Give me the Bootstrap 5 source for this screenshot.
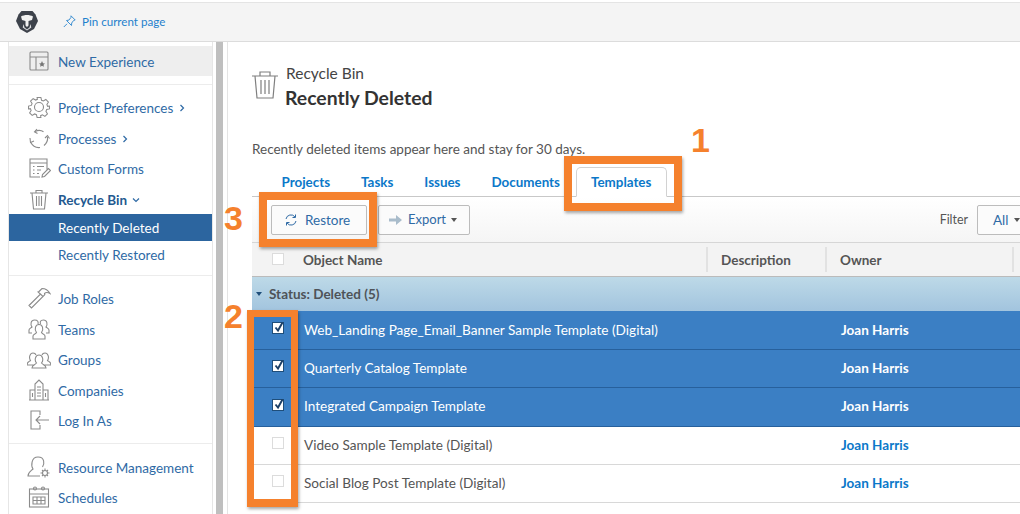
<!DOCTYPE html>
<html lang="en"><head><meta charset="utf-8"><title>Recycle Bin</title>
<link href="https://cdn.jsdelivr.net/npm/bootstrap@5.3.0/dist/css/bootstrap.min.css" rel="stylesheet">
<style>
html,body{height:514px;overflow:hidden;background:#fff}
body{font-family:Lato,"Liberation Sans",sans-serif;font-size:13.6px;color:#555;position:relative}
.topbar{height:40px;margin-top:2px;background:#f4f4f4;border-top:1px solid #e4e4e4;border-bottom:1px solid #dcdcdc;padding-left:15px}
.pin-link{margin-left:24px;font-size:11.6px;color:#1f80cc;text-decoration:none;gap:6px}
.shell{height:472px;overflow:hidden}
.side-nav{width:205px;margin-left:8px;border-left:1px solid #e6e6e6;border-right:1px solid #e6e6e6;flex:none;font-size:13.5px}
.side-sec{border-bottom:1px solid #ececec}
.sec-a{padding:4px 0 8px}
.sec-b{padding:7px 0}
.sec-c{padding:8px 0 0;border-bottom:0}
.side-link{height:30.5px;padding:2px 0 0 18px;gap:7px;color:#2f6aa5;text-decoration:none;white-space:nowrap}
.side-link svg{width:24px;height:24px;flex:none;fill:none;stroke:#8b8b8b;stroke-width:1.1;margin-top:-2px}
.side-link .chev{width:8px;height:8px;stroke:#2f6aa5;stroke-width:1.2;margin:0 0 0 -2px}
.side-first{height:30px;background:#eee}
.side-sub{height:27px;padding:2px 0 0 49px;color:#2f6aa5;text-decoration:none}
.side-sub.on{background:#2c659f;color:#fff}
.side-strong{font-weight:700;color:#23598f}
.rail{width:7px;margin-left:3px;background:#bfbfbf;flex:none}
.pane{margin-left:4px;border-left:1px solid #e4e4e4;padding:21px 0 0 24px;flex:1;min-width:0;overflow:hidden}
.title-wrap{gap:7px;height:45px;margin-left:-1px}
.title-wrap svg{width:28px;height:30px;fill:none;stroke:#7f7f7f;stroke-width:1.2;margin-top:7px}
.crumb{font-size:15.5px;color:#444;line-height:20px}
.page-title{font-size:19.4px;font-weight:700;color:#333;line-height:30px;margin:0 0 0 -1px}
.intro{margin:31px 0 0;line-height:20px;color:#555;font-size:13.5px}
.tab-strip{margin-top:8px;padding-left:14px;height:30px;border-bottom:1px solid #c8c8c8;width:768px}
.tab-strip .nav-link{padding:6px 14.5px;border:1px solid transparent;font-weight:700;font-size:13.4px;color:#0b78c9;line-height:17px;height:30px;border-radius:5px 5px 0 0}
.tab-strip .nav-link.active{color:#0b78c9;background:#fff;border-color:#d2d2d2 #d2d2d2 #fff;height:30px}
.tool-row{width:768px;height:46px;padding:8px 0 0 19px;background:linear-gradient(#fff,#f5f5f5);border-bottom:1px solid #d6d6d6}
.tool-btn{height:30px;padding:0 12px 0 9px;gap:5px;font-size:13px;border:1px solid #bcbcbc;border-radius:2px;background:#fbfbfb;color:#2f6aa5}
.tool-restore{width:96px;margin-right:11px;padding-left:12px;gap:7px;font-size:13.5px}
.tool-filter{margin-left:auto;margin-right:-13px;gap:9px;color:#555;font-size:12.4px;height:30px;padding-top:1px}
.tool-filter .tool-btn{padding:0 0 0 15px;width:56px;font-size:13.5px;margin-top:-1px}
.caret-dn{width:0;height:0;border:3.5px solid transparent;border-top:4px solid #555;border-bottom:0}
.rows-table{table-layout:fixed;width:768px;margin:0;border-collapse:collapse;color:#555}
.rows-table th,.rows-table td{padding:0;vertical-align:middle;border:0;background:transparent;color:inherit;box-shadow:none}
.head-row{height:33px;background:#f3f3f3;font-size:13.5px}
.head-row th{font-weight:700;border-bottom:1px solid #bbb!important}
.head-cell{height:25px;line-height:27px;border-left:2px solid #e2e2e2;padding-left:13px}
.head-name{padding-top:2px!important}
.group-row{height:35px;background:linear-gradient(#bedae8,#a2c4de);font-weight:700;font-size:13.5px}
.group-row td{padding-left:4px!important;color:#4e5358!important}
.tri{display:inline-block;width:0;height:0;border:3.5px solid transparent;border-top:4px solid #1f4e7a;border-bottom:0;margin-right:7px;vertical-align:3px}
.item-row{height:38px}
.item-tall{height:39px}
.item-row td{border-bottom:1px solid #d8d8d8!important}
.item-row.sel{background:#3b7fc4;color:#fff}
.item-row.sel td{border-bottom-color:#27609c!important}
.name-cell{padding-left:1px!important}
.owner{font-weight:700;padding-left:16px!important;color:#0b78c9!important;font-size:13.5px}
.item-row.sel .owner{color:#fff!important}
.box-cell{padding:0 0 4px 20px!important}
.tick{display:block;width:12px;height:12px;background:#fff;border:1px solid #dcdcdc;position:relative}
.sel .tick{border:1px solid #1f4e7a}
.tick svg{position:absolute;left:0;top:-2px;width:12px;height:12px}
.head-tick{margin:0 0 0 20px}
.mark-box{position:absolute;border:8px solid #f5812d;box-shadow:1px 2px 3px rgba(0,0,0,.35);pointer-events:none}
.mark-thin{border-width:7px 7px 8px}
.mark-num{position:absolute;color:#f5812d;font:700 34px/34px "Liberation Sans",sans-serif}
</style></head>
<body>
<header class="topbar d-flex align-items-center">
<svg width="24" height="24" viewBox="0 0 24 24"><path d="M6.500 1h11l3 3.500L23 11l-4 8-7 4-7-4-4-8 2.500-6.500z" fill="#3d424b"/><path d="M6 6.500c3.500-2 8.500-2 12 0l-1 3.500-3.500 1v4.500L12 17l-1.500-1.500V11L7 10z" fill="#f2f2f2"/><path d="M8.500 14l1 3.500 2.500 2 2.500-2 1-3.500.8 3.500-4.300 3-4.300-3z" fill="#dfe0e2"/></svg>
<a class="pin-link d-flex align-items-center" href="#"><svg width="13" height="13" viewBox="0 0 13 13" fill="none" stroke="#3d8fd1"><path d="M8 .8l4.200 4.200-1.500.4-2 2.600-.2 2.500-5-5 2.400-.4L8 2.400zM4 8.800L.8 12"/></svg>Pin current page</a>
</header>
<div class="shell d-flex">
<nav class="side-nav">
<div class="side-sec sec-a">
<a class="side-link side-first d-flex align-items-center" href="#"><svg viewBox="0 0 24 24"><rect x="3" y="3" width="18" height="18" rx="1"/><path d="M3 8h18M9 8v13"/><path d="M15 12l1 2.200 2 .2-1.500 1.400.4 2-1.900-1-1.900 1 .4-2-1.500-1.400 2-.2z" fill="#777" stroke="none"/></svg>New Experience</a>
</div>
<div class="side-sec sec-b">
<a class="side-link d-flex align-items-center" href="#"><svg viewBox="0 0 24 24"><circle cx="12" cy="12" r="4.500"/><path d="M10 2h4l.7 2.900 1.900.8 2.600-1.600 2.700 2.700-1.600 2.600.8 1.900L23 11v3l-2.900.7-.8 1.900 1.600 2.600-2.700 2.700-2.600-1.600-1.900.8L14 23h-4l-.7-2.900-1.900-.8-2.600 1.600-2.700-2.700 1.600-2.600-.8-1.900L1 14v-3l2.900-.7.8-1.900-1.600-2.600 2.700-2.700 2.600 1.600 1.900-.8z" transform="translate(.6 .6) scale(.95)"/></svg>Project Preferences<svg class="chev" viewBox="0 0 8 8"><path d="M2.500 1l3 3-3 3"/></svg></a>
<a class="side-link d-flex align-items-center" href="#"><svg viewBox="0 0 24 24"><path d="M8 5.500c3-1.500 6-1.500 8.500.3M20.500 11c.5 3.500-.5 6-3.500 8.500M13 21.500c-4 .5-7-.8-9.500-5.500"/><path d="M10 3L7.500 5.800l3 1.700M22.500 12.500L20.500 9.500 18 12M3 12l.5 4.500L7 15" /></svg>Processes<svg class="chev" viewBox="0 0 8 8"><path d="M2.500 1l3 3-3 3"/></svg></a>
<a class="side-link d-flex align-items-center" href="#"><svg viewBox="0 0 24 24"><path d="M13 21H3V3h17v11M3 7h17M6 10.500h1.500M10 10.500h7M6 14h1.500M10 14h4M6 17.500h1.500M10 17.500h2M15 21l.5-2.500 6-6 2 2-6 6z"/></svg>Custom Forms</a>
<a class="side-link side-strong d-flex align-items-center" href="#"><svg viewBox="0 0 24 24"><path d="M3 6h18M9 6V3.500h6V6M5 6l1.500 16h11L19 6M9.500 9v10M12 9v10M14.500 9v10"/></svg>Recycle Bin<svg class="chev" viewBox="0 0 8 8"><path d="M1 2.500l3 3 3-3"/></svg></a>
<a class="side-sub on d-flex align-items-center" href="#">Recently Deleted</a>
<a class="side-sub d-flex align-items-center" href="#">Recently Restored</a>
</div>
<div class="side-sec sec-b">
<a class="side-link d-flex align-items-center" href="#"><svg viewBox="0 0 24 24"><path d="M2 19.500L13.500 8l2.500 2.500L4.500 22zM12 5.500L15 2.500c3 0 6 1.500 8 5-2.500-1.500-4-1.500-5.500 0l.3 1-1.800 2-5-4.500z"/></svg>Job Roles</a>
<a class="side-link d-flex align-items-center" href="#"><svg viewBox="0 0 24 24"><path d="M5 16H2v-3c0-1.500 2-2 3-3-2-3-1-7 2.500-7s4 2 3.500 4M19 16h3v-3c0-1.500-2-2-3-3 2-3 1-7-2.500-7S13 5 13.500 7M6 22v-3c0-2 3-2 3.500-3.500-2.500-3.500-1-8 2.500-8s5 4.500 2.500 8C15 17 18 17 18 19v3z"/></svg>Teams</a>
<a class="side-link d-flex align-items-center" href="#"><svg viewBox="0 0 24 24"><path d="M7 18H0c0-3 1.500-3 3.500-4.500-2-3-.5-7.500 2.500-7.500 1.500 0 2.500.5 3 2M17 18h7c0-3-1.500-3-3.500-4.500 2-3 .5-7.500-2.500-7.500-1.500 0-2.500.5-3 2M5 21c0-3 3-3 4.500-5-2.500-3-1-8 2.500-8s5 5 2.500 8c1.500 2 4.500 2 4.500 5z"/></svg>Groups</a>
<a class="side-link d-flex align-items-center" href="#"><svg viewBox="0 0 24 24"><path d="M8 22V6l4-4 4 4v16M8 22H3V12h5M16 12h5v10h-5M2 22h20M10 9h4M10 12h4M10 15h4M10 18h4M5.500 15v4M18.500 15v4"/></svg>Companies</a>
<a class="side-link d-flex align-items-center" href="#"><svg viewBox="0 0 24 24"><path d="M13 7V3H4v18h9v-4M22 12H9M13 8l-4 4 4 4"/></svg>Log In As</a>
</div>
<div class="side-sec sec-c">
<a class="side-link d-flex align-items-center" href="#"><svg viewBox="0 0 24 24"><path d="M13 21H1c0-4 3-5 5-7-2-3-2-12 5-12s6.500 7 4.500 10"/><circle cx="18" cy="18" r="2.500"/><path d="M18 13.500v2M18 20.500v2M13.500 18h2M20.500 18h2M15 15l1.200 1.200M19.800 19.800L21 21M15 21l1.200-1.200M19.800 16.200L21 15"/></svg>Resource Management</a>
<a class="side-link d-flex align-items-center" href="#"><svg viewBox="0 0 24 24"><rect x="2.500" y="4" width="19" height="18"/><path d="M2.500 9h19M6 12h12v7H6zM6 15.500h12M10 12v7M14 12v7"/><circle cx="8" cy="3.500" r="1.500"/><circle cx="16" cy="3.500" r="1.500"/></svg>Schedules</a>
</div>
</nav>
<div class="rail"></div>
<main class="pane">
<div class="title-wrap d-flex">
<svg viewBox="0 0 28 30"><path d="M1 6h26M9 6V2h10v4M4 6l2 22h16l2-22M10 10v14M14 10v14M18 10v14"/></svg>
<div><div class="crumb">Recycle Bin</div><h1 class="page-title">Recently Deleted</h1></div>
</div>
<p class="intro">Recently deleted items appear here and stay for 30 days.</p>
<ul class="nav tab-strip">
<li class="nav-item"><a class="nav-link" href="#">Projects</a></li>
<li class="nav-item"><a class="nav-link" href="#">Tasks</a></li>
<li class="nav-item"><a class="nav-link" href="#">Issues</a></li>
<li class="nav-item"><a class="nav-link" href="#">Documents</a></li>
<li class="nav-item"><a class="nav-link active" href="#">Templates</a></li>
</ul>
<div class="tool-row d-flex">
<button class="tool-btn tool-restore d-flex align-items-center" type="button"><svg width="14" height="14" viewBox="0 0 14 14" fill="none" stroke="#2f6aa5"><path d="M2 6a5 5 0 0 1 9-2M12 8a5 5 0 0 1-9 2M11.500 1.500V4.500H8.500M2.500 12.500V9.500h3"/></svg>Restore</button>
<button class="tool-btn d-flex align-items-center" type="button"><svg width="15" height="12" viewBox="0 0 15 12"><path d="M1 4.500h7V1l6 5-6 5V7.500H1z" fill="#a9bccb"/></svg>Export<span class="caret-dn"></span></button>
<div class="tool-filter d-flex align-items-center align-self-start">Filter<button class="tool-btn d-flex align-items-center" type="button">All<span class="caret-dn"></span></button></div>
</div>
<table class="table rows-table">
<colgroup><col style="width:51px"><col style="width:403px"><col style="width:119px"><col style="width:187px"><col style="width:8px"></colgroup>
<thead><tr class="head-row"><th><span class="tick head-tick"></span></th><th class="head-name">Object Name</th><th><div class="head-cell">Description</div></th><th><div class="head-cell">Owner</div></th><th><div class="head-cell"></div></th></tr></thead>
<tbody>
<tr class="group-row"><td colspan="5"><span class="tri"></span>Status: Deleted (5)</td></tr>
<tr class="item-row sel"><td class="box-cell"><span class="tick"><svg viewBox="0 0 12 12" fill="none" stroke="#1c3f66" stroke-width="1.9"><path d="M2.500 6.500l2.500 3 4.500-8"/></svg></span></td><td class="name-cell">Web_Landing Page_Email_Banner Sample Template (Digital)</td><td></td><td class="owner">Joan Harris</td><td></td></tr>
<tr class="item-row sel"><td class="box-cell"><span class="tick"><svg viewBox="0 0 12 12" fill="none" stroke="#1c3f66" stroke-width="1.9"><path d="M2.500 6.500l2.500 3 4.500-8"/></svg></span></td><td class="name-cell">Quarterly Catalog Template</td><td></td><td class="owner">Joan Harris</td><td></td></tr>
<tr class="item-row item-tall sel"><td class="box-cell"><span class="tick"><svg viewBox="0 0 12 12" fill="none" stroke="#1c3f66" stroke-width="1.9"><path d="M2.500 6.500l2.500 3 4.500-8"/></svg></span></td><td class="name-cell">Integrated Campaign Template</td><td></td><td class="owner">Joan Harris</td><td></td></tr>
<tr class="item-row"><td class="box-cell"><span class="tick"></span></td><td class="name-cell">Video Sample Template (Digital)</td><td></td><td class="owner">Joan Harris</td><td></td></tr>
<tr class="item-row"><td class="box-cell"><span class="tick"></span></td><td class="name-cell">Social Blog Post Template (Digital)</td><td></td><td class="owner">Joan Harris</td><td></td></tr>
</tbody></table>
</main>
</div>
<div class="mark-box" style="left:564px;top:156px;width:118px;height:55px"></div>
<div class="mark-box" style="left:259px;top:192px;width:118px;height:55px"></div>
<div class="mark-box mark-thin" style="left:247px;top:310px;width:51px;height:197px"></div>
<div class="mark-num" style="left:691px;top:123px">1</div>
<div class="mark-num" style="left:224px;top:201px">3</div>
<div class="mark-num" style="left:224px;top:299px">2</div>
</body></html>
